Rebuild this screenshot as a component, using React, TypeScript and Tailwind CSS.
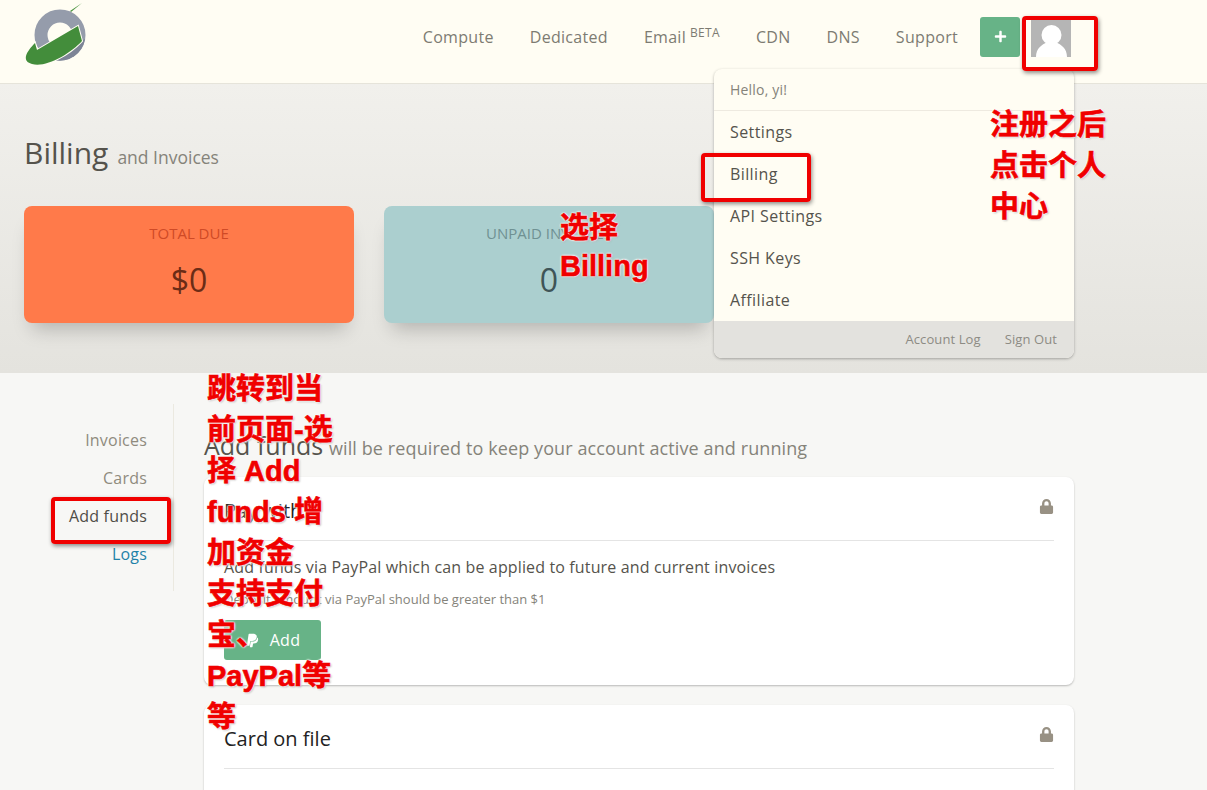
import { FaLock, FaPaypal, FaPlus } from "react-icons/fa";

const menuItems = ["Settings", "Billing", "API Settings", "SSH Keys", "Affiliate"];
const sideLinks = [
  { label: "Invoices", color: "text-[#8f8b7e]" },
  { label: "Cards", color: "text-[#8f8b7e]" },
  { label: "Add funds", color: "text-[#4f4d47]" },
  { label: "Logs", color: "text-[#1f82a8]" },
];

function Logo() {
  return (
    <svg viewBox="0 0 64 64" className="h-[64px] w-[64px] shrink-0">
      <path d="M58 1 L46 9 L47 10 Z" fill="#4a9440" />
      <circle cx="36" cy="33" r="19" fill="none" stroke="#959cab" strokeWidth="13" />
      <path d="M30 58 A25.5 25.5 0 0 0 61 37 L40 50 Z" fill="#7d8496" />
      <path
        d="M54 24 L58 39 C46 52 22 66 8 62 C4 61 1 59 2 54 C3 50 7 45 11 41 L13 48 Z"
        fill="#438d3b"
        stroke="#fffdf3"
        strokeWidth="2"
        paintOrder="stroke"
      />
    </svg>
  );
}

function Avatar() {
  return (
    <svg viewBox="0 0 40 40" className="ml-[11px] h-[40px] w-[40px] shrink-0 bg-[#b5b5b5]">
      <circle cx="20.5" cy="18" r="10" fill="#fff" />
      <path d="M5 40 C5 31 11 28 16 25 L25 25 C30 28 36 31 36 40 Z" fill="#fff" />
    </svg>
  );
}

function Callout({ lines, className }: { lines: string[]; className: string }) {
  return (
    <div
      className={`pointer-events-none absolute z-30 text-[29px] leading-[41px] font-bold whitespace-nowrap text-[#f00000] [-webkit-text-stroke:0.6px_#f00000] [font-family:'Liberation_Sans','Noto_Sans_CJK_SC',sans-serif] [text-shadow:0_0_2px_#fff,0_0_2px_#fff,0_0_2px_#fff,0_0_3px_#fff,1px_1px_2px_#999] ${className}`}
    >
      {lines.map((line) => (
        <div key={line}>{line}</div>
      ))}
    </div>
  );
}

function RedBox({ className }: { className: string }) {
  return (
    <div
      className={`pointer-events-none absolute z-30 rounded-[4px] border-[4px] border-[#f00000] shadow-[1px_2px_4px_rgba(0,0,0,0.45)] ${className}`}
    />
  );
}

function StatCard({
  title,
  value,
  className,
  titleColor,
  valueColor,
}: {
  title: string;
  value: string;
  className: string;
  titleColor: string;
  valueColor: string;
}) {
  return (
    <div
      className={`flex h-[117px] w-[330px] flex-col items-center rounded-lg pt-[17px] shadow-[0_14px_18px_-8px_rgba(0,0,0,0.22)] ${className}`}
    >
      <div className={`text-[15px] leading-[20px] ${titleColor}`}>{title}</div>
      <div className={`mt-[15px] text-[32px] leading-[44px] ${valueColor}`}>{value}</div>
    </div>
  );
}

export default function App() {
  return (
    <div className="relative h-[790px] w-[1207px] overflow-hidden bg-[#f7f7f5] text-[#55534c] [font-family:'Open_Sans',sans-serif]">
      <header className="flex h-[84px] items-center border-b border-[#e6e4da] bg-[#fffdf3] pr-[136px] pb-[10px] pl-[24px]">
        <div className="-mt-[5px]">
          <Logo />
        </div>
        <nav className="ml-auto flex items-center gap-[36px] text-[16px] tracking-[0.3px] text-[#7d7b72]">
          <span>Compute</span>
          <span>Dedicated</span>
          <span className="flex items-start gap-[4px]">
            Email <span className="mt-[1px] text-[12px] leading-[14px]">BETA</span>
          </span>
          <span>CDN</span>
          <span>DNS</span>
          <span>Support</span>
        </nav>
        <button className="ml-[22px] flex h-[40px] w-[40px] items-center justify-center rounded-[3px] bg-[#67b387] text-white">
          <FaPlus size={13} />
        </button>
        <Avatar />
      </header>

      {/* user dropdown */}
      <div className="absolute top-[69px] left-[714px] z-20 flex h-[289px] w-[360px] flex-col rounded-lg bg-[#fffdf3] shadow-[0_1px_3px_rgba(0,0,0,0.3)]">
        <div className="absolute -top-[6px] left-[330px] h-[12px] w-[12px] rotate-45 bg-[#fffdf3]" />
        <div className="flex h-[42px] items-center border-b border-[#eeeae0] px-[16px] text-[14px] tracking-[0.2px] text-[#85837a]">
          Hello, yi!
        </div>
        <div className="flex flex-1 flex-col">
          {menuItems.map((item) => (
            <div key={item} className="flex h-[42px] items-center px-[16px] text-[16px] tracking-[0.4px] text-[#55534c]">
              {item}
            </div>
          ))}
        </div>
        <div className="flex h-[37px] items-center justify-end gap-[24px] rounded-b-lg bg-[#e3e2de] px-[17px] text-[13px] tracking-[0.1px] text-[#8d8b84]">
          <span>Account Log</span>
          <span>Sign Out</span>
        </div>
      </div>

      <section className="h-[289px] bg-gradient-to-b from-[#f1f0ec] to-[#e4e3de] px-[24px] pt-[49px]">
        <div className="flex items-baseline gap-[9px]">
          <h1 className="text-[30px] leading-[40px] text-[#55534c]">Billing</h1>
          <span className="text-[17.5px] text-[#85837a]">and Invoices</span>
        </div>
        <div className="mt-[33px] flex gap-[30px]">
          <StatCard
            title="TOTAL DUE"
            value="$0"
            className="bg-[#ff7a4a]"
            titleColor="text-[#cf4a26]"
            valueColor="text-[#6b2c16]"
          />
          <StatCard
            title="UNPAID INVOICES"
            value="0"
            className="bg-[#abcfcf]"
            titleColor="text-[#6f9193]"
            valueColor="text-[#3f5557]"
          />
        </div>
      </section>

      <div className="flex items-start pt-[31px]">
        <aside className="flex h-[187px] w-[174px] flex-col items-end gap-[15px] border-r border-[#ebe9e0] pt-[25px] pr-[26px] text-[16px] leading-[23px] tracking-[0.2px]">
          {sideLinks.map((link) => (
            <span key={link.label} className={link.color}>
              {link.label}
            </span>
          ))}
        </aside>
        <main className="ml-[30px] w-[870px]">
          <div className="mt-[26px] flex items-baseline">
            <h2 className="w-[125px] shrink-0 text-[25px] leading-[30px] whitespace-nowrap text-[#55534c]">Add funds</h2>
            <span className="text-[18px] tracking-[0.1px] text-[#85837a]">will be required to keep your account active and running</span>
          </div>
          <div className="mt-[15px] h-[208px] rounded-lg bg-white px-[20px] shadow-[0_1px_2px_rgba(0,0,0,0.25)]">
            <div className="flex h-[64px] items-center justify-between border-b border-[#e4e4e4] pt-[4px] text-[20px] text-[#222]">
              <span>Pay with</span>
              <FaLock size={15} className="-mt-[8px] text-[#989184]" />
            </div>
            <p className="mt-[14px] text-[16px] leading-[24px] tracking-[0.14px] text-[#55534c]">
              Add funds via PayPal which can be applied to future and current invoices
            </p>
            <p className="mt-[10px] text-[13px] leading-[20px] text-[#85837a]">
              Deposit amount via PayPal should be greater than $1
            </p>
            <button className="mt-[11px] flex h-[40px] w-[97px] items-center justify-center gap-[10px] rounded-[3px] bg-[#67b387] text-[16px] tracking-[0.3px] text-white">
              <FaPaypal size={15} />
              Add
            </button>
          </div>
          <div className="mt-[20px] h-[120px] rounded-lg bg-white px-[20px] shadow-[0_1px_2px_rgba(0,0,0,0.25)]">
            <div className="flex h-[64px] items-center justify-between border-b border-[#e4e4e4] pt-[4px] text-[20px] text-[#222]">
              <span>Card on file</span>
              <FaLock size={15} className="-mt-[8px] text-[#989184]" />
            </div>
          </div>
        </main>
      </div>

      {/* annotations pasted over the screenshot */}
      <RedBox className="top-[16px] left-[1022px] h-[55px] w-[76px]" />
      <RedBox className="top-[153px] left-[701px] h-[49px] w-[110px]" />
      <RedBox className="top-[497px] left-[51px] h-[47px] w-[120px]" />
      <Callout lines={["注册之后", "点击个人", "中心"]} className="top-[105px] left-[990px]" />
      <Callout lines={["选择"]} className="top-[208px] left-[560px]" />
      <Callout lines={["Billing"]} className="top-[246px] left-[560px]" />
      <Callout
        lines={["跳转到当", "前页面-选", "择 Add", "funds 增", "加资金", "支持支付", "宝、", "PayPal等", "等"]}
        className="top-[369px] left-[207px]"
      />
    </div>
  );
}
